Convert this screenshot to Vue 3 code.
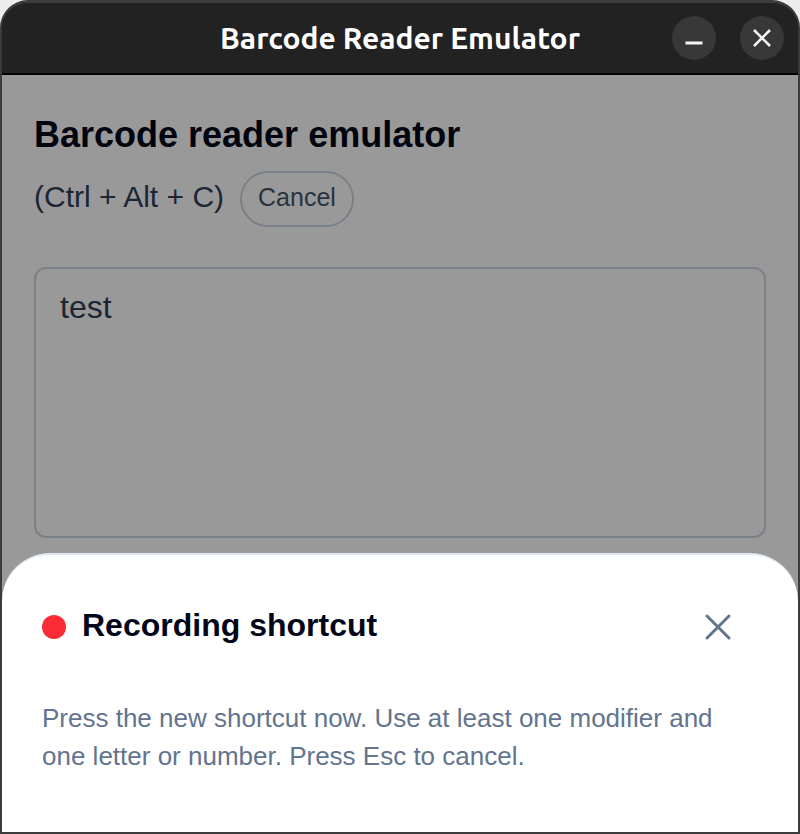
<script setup>
import { ref } from 'vue'

const shortcut = ref('Ctrl + Alt + C')
const text = ref('test')
const recording = ref(true)

function toggleRecording() {
  recording.value = !recording.value
}
</script>

<template>
  <div class="window">
    <header class="titlebar">
      <span class="titlebar__title">Barcode Reader Emulator</span>
      <div class="titlebar__controls">
        <button class="window-btn" type="button" aria-label="Minimize">
          <svg viewBox="0 0 44 44" fill="none" stroke="#f4f4f4" stroke-width="3">
            <path d="M13.5 27h17" />
          </svg>
        </button>
        <button class="window-btn" type="button" aria-label="Close window">
          <svg viewBox="0 0 44 44" fill="none" stroke="#f4f4f4" stroke-width="2.6">
            <path d="M14 14l16 16M30 14L14 30" />
          </svg>
        </button>
      </div>
    </header>

    <div class="body">
      <main class="content">
        <h1 class="content__title">Barcode reader emulator</h1>
        <div class="shortcut">
          <span class="shortcut__keys">({{ shortcut }})</span>
          <button class="shortcut__btn" type="button" @click="toggleRecording">
            {{ recording ? 'Cancel' : 'Change' }}
          </button>
        </div>
        <textarea v-model="text" class="content__input" aria-label="Text to send"></textarea>
      </main>

      <!-- Dimmed backdrop with the bottom sheet -->
      <div v-if="recording" class="backdrop">
        <section class="sheet" role="dialog" aria-labelledby="sheet-title">
          <div class="sheet__header">
            <span class="sheet__dot"></span>
            <h2 id="sheet-title" class="sheet__title">Recording shortcut</h2>
            <button class="sheet__close" type="button" aria-label="Close" @click="recording = false">
              <svg viewBox="0 0 28 28" fill="none" stroke="#62748e" stroke-width="3" stroke-linecap="round">
                <path d="M3 3l22 22M25 3L3 25" />
              </svg>
            </button>
          </div>
          <p class="sheet__text">
            Press the new shortcut now. Use at least one modifier and one letter or number. Press Esc to cancel.
          </p>
        </section>
      </div>
    </div>
  </div>
</template>

<style>
body {
  margin: 0;
  background: #ededed;
}
</style>

<style scoped>
.window {
  box-sizing: border-box;
  display: flex;
  flex-direction: column;
  min-height: 100vh;
  border: 2px solid #3b3b3b;
  border-top-width: 3px;
  border-radius: 28px 28px 0 0;
  background: #222;
  overflow: hidden;
  font-family: "Liberation Sans", Arial, sans-serif;
}

.titlebar {
  display: grid;
  grid-template-columns: 1fr auto 1fr;
  align-items: center;
  height: 70px;
  padding: 0 14px;
  border-bottom: 2px solid #000;
  background: #222;
}

.titlebar__title {
  grid-column: 2;
  color: #fff;
  font-family: Ubuntu, "Noto Sans", sans-serif;
  font-size: 30px;
  font-weight: 700;
  white-space: nowrap;
}

.titlebar__controls {
  display: flex;
  justify-content: flex-end;
  gap: 24px;
}

.window-btn {
  width: 44px;
  height: 44px;
  padding: 0;
  border: none;
  border-radius: 50%;
  background: #383838;
  cursor: pointer;
}

.window-btn svg {
  display: block;
}

.body {
  position: relative;
  display: flex;
  flex: 1;
  flex-direction: column;
  background: #fff;
}

.content {
  padding: 36px 32px;
}

.content__title {
  margin: 0 0 12px;
  color: #020618;
  font-size: 36px;
  line-height: 48px;
}

.shortcut {
  display: flex;
  align-items: center;
  gap: 16px;
  margin-bottom: 40px;
}

.shortcut__keys {
  padding-bottom: 4px;
  color: #314158;
  font-size: 30px;
  line-height: 40px;
}

.shortcut__btn {
  height: 56px;
  padding: 0 16px 4px;
  border: 2px solid #cad5e2;
  border-radius: 28px;
  background: transparent;
  color: #45556c;
  font-family: inherit;
  font-size: 25px;
  cursor: pointer;
}

.content__input {
  display: block;
  box-sizing: border-box;
  width: 100%;
  height: 271px;
  padding: 14px 24px;
  border: 2px solid #cad5e2;
  border-radius: 12px;
  background: transparent;
  color: #314158;
  font-family: inherit;
  font-size: 32px;
  line-height: 48px;
  resize: none;
  outline: none;
}

.backdrop {
  position: absolute;
  inset: 0;
  display: flex;
  align-items: flex-end;
  background: rgba(0, 0, 0, 0.4);
}

.sheet {
  flex: 1;
  padding: 44px 40px 57px;
  border-top: 2px solid #e2e8f0;
  border-radius: 48px 48px 0 0;
  background: #fff;
}

.sheet__header {
  display: flex;
  align-items: center;
  gap: 16px;
  margin-bottom: 44px;
}

.sheet__dot {
  width: 24px;
  height: 24px;
  border-radius: 50%;
  background: #fb2c36;
}

.sheet__title {
  flex: 1;
  margin: 0;
  padding-bottom: 4px;
  color: #020618;
  font-size: 32px;
  line-height: 48px;
}

.sheet__close {
  width: 56px;
  height: 56px;
  padding: 14px;
  margin-right: 12px;
  border: none;
  border-radius: 50%;
  background: transparent;
  cursor: pointer;
}

.sheet__close svg {
  display: block;
}

.sheet__text {
  margin: 0;
  color: #62748e;
  font-size: 26px;
  line-height: 38px;
}
</style>
